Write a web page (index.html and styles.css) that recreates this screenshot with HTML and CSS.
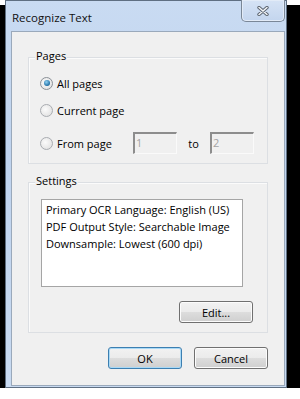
FILE: index.html
```html
<!DOCTYPE html>
<html lang="en">
<head>
    <meta charset="UTF-8">
    <title>Recognize Text</title>
    <link rel="stylesheet" href="styles.css">
</head>
<body>

<div class="window">
    <div class="titlebar">
        <span class="title">Recognize Text</span>
        <div class="close">
            <svg width="12" height="10" viewBox="0 0 12 10">
                <path d="M2 1.5 L10 8.5 M10 1.5 L2 8.5" stroke="#5b6470" stroke-width="3.4" stroke-linecap="round"/>
                <path d="M2 1.5 L10 8.5 M10 1.5 L2 8.5" stroke="#f4f6f8" stroke-width="1.5" stroke-linecap="round"/>
            </svg>
        </div>
    </div>

    <div class="client">
        <div class="group pages">
            <div class="group-title">Pages</div>
            <div class="option">
                <span class="radio checked"></span>
                <span>All pages</span>
            </div>
            <div class="option">
                <span class="radio"></span>
                <span>Current page</span>
            </div>
            <div class="option range">
                <span class="radio"></span>
                <span class="range-label">From page</span>
                <span class="textbox">1</span>
                <span class="to">to</span>
                <span class="textbox">2</span>
            </div>
        </div>

        <div class="group settings">
            <div class="group-title">Settings</div>
            <div class="listbox">
                <div>Primary OCR Language: English (US)</div>
                <div>PDF Output Style: Searchable Image</div>
                <div>Downsample: Lowest (600 dpi)</div>
            </div>
            <button class="btn edit">Edit...</button>
        </div>

        <div class="actions">
            <button class="btn default">OK</button>
            <button class="btn">Cancel</button>
        </div>
    </div>
</div>

</body>
</html>
```

FILE: styles.css
```css
body {
    margin: 0;
    background: #fff;
    font-family: "Open Sans", "Noto Sans", sans-serif;
    font-size: 11px;
    color: #000;
}
/* window with its black drop shadow */
.window {
    box-sizing: border-box;
    width: 282px;
    height: 388px;
    margin-left: 5px;
    border: 1px solid #5f6f82;
    padding: 0 1px 1px 5px;
    background: linear-gradient(#c9dbf2, #bfd3ee 40%, #c8daf1);
    box-shadow: 13px 9px #000, -5px 5px #000, -5px 9px #000, 13px 5px #000;
    display: flex;
    flex-direction: column;
}
.titlebar {
    height: 30px;
    display: flex;
    justify-content: space-between;
    align-items: flex-start;
}
.title {
    padding: 9px 0 0 1px;
    line-height: 16px;
    font-size: 11.5px;
    color: #111;
}
.close {
    width: 44px;
    height: 22px;
    margin-top: -1px;
    box-sizing: border-box;
    border: 1px solid #7a8797;
    border-top: none;
    border-radius: 0 0 5px 5px;
    background: linear-gradient(#d6e3f5, #c3d5ee);
    box-shadow: inset 0 0 0 1px #e2ebf7;
    display: flex;
    align-items: center;
    justify-content: center;
}
.client {
    box-sizing: border-box;
    width: 274px;
    height: 355px;
    border: 1px solid #9aa9bb;
    background: #f0f0f0;
    padding: 25px 16px 0 16px;
    display: flex;
    flex-direction: column;
}
.group {
    border: 1px solid #dcdfe3;
    box-shadow: inset 1px 1px #fbfbfb;
    display: flex;
    flex-direction: column;
    padding: 0 0 9px 11px;
}
.group-title {
    align-self: flex-start;
    margin: -10px 0 0 -5px;
    padding: 0 1px;
    line-height: 16px;
    background: #f0f0f0;
}
.option {
    height: 16px;
    margin-top: 11px;
    display: flex;
    align-items: center;
}
.option.range {
    height: 22px;
    margin-top: 14px;
}
.radio {
    box-sizing: border-box;
    width: 13px;
    height: 13px;
    margin-right: 4px;
    border-radius: 50%;
    border: 1px solid #a9acb1;
    background: radial-gradient(circle at 40% 40%, #fbfbfb, #dcdcdc);
    display: flex;
    align-items: center;
    justify-content: center;
}
.radio.checked {
    border-color: #8a9097;
}
.radio.checked::after {
    content: "";
    width: 6px;
    height: 6px;
    border-radius: 50%;
    background: radial-gradient(circle at 40% 35%, #8fd0f2, #1f6fa5 70%, #164f7a);
}
.range-label {
    width: 76px;
}
.textbox {
    box-sizing: border-box;
    width: 44px;
    height: 22px;
    border-style: solid;
    border-width: 2px 1px 1px 2px;
    border-color: #8d8d8d #fafafa #fafafa #8d8d8d;
    padding: 1px 0 0 1px;
    color: #a3a3a3;
    line-height: 16px;
}
.to {
    width: 33px;
    text-align: center;
}
.settings {
    margin-top: 18px;
}
.listbox {
    box-sizing: border-box;
    width: 202px;
    height: 88px;
    margin: 10px 0 0 1px;
    border: 1px solid #a5a5a5;
    background: #fff;
    padding: 1px 0 0 4px;
    line-height: 17px;
}
.btn {
    box-sizing: border-box;
    width: 74px;
    height: 22px;
    padding: 0;
    font: inherit;
    color: #000;
    border: 1px solid #707070;
    border-radius: 3px;
    background: linear-gradient(#f2f2f2, #ebebeb 50%, #dddddd 51%, #cfcfcf);
    box-shadow: inset 0 0 0 1px #fcfcfc;
}
.edit {
    align-self: flex-end;
    margin: 14px 14px 0 0;
}
.actions {
    margin-top: 14px;
    display: flex;
    justify-content: flex-end;
    gap: 12px;
}
.btn.default {
    border-color: #3c7fb1;
    box-shadow: inset 0 0 0 1px #a9d9f6;
}
```
